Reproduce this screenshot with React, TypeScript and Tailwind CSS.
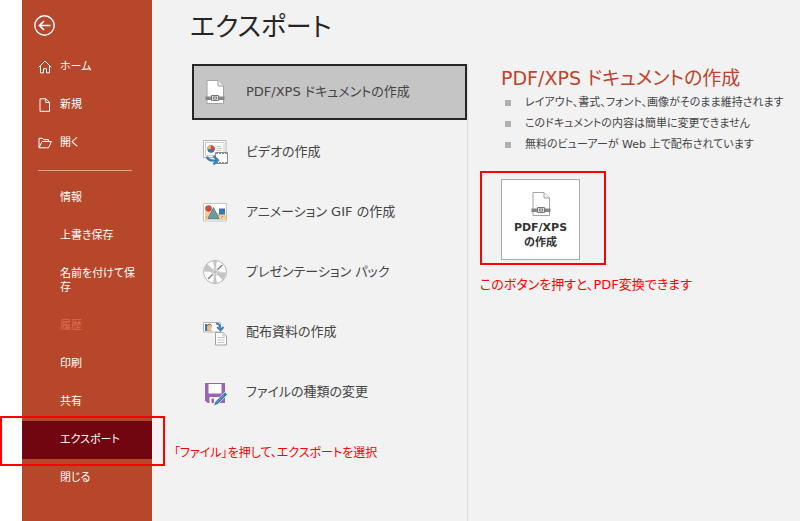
import { useState, type ReactNode } from "react";
import { clsx } from "clsx";

type NavItem = { label: string; icon?: ReactNode; disabled?: boolean };

function HomeIcon() {
  return (
    <svg viewBox="0 0 14 14" className="h-[14px] w-[14px]" fill="none" stroke="currentColor" strokeWidth="1">
      <path d="M.7 7.3 7 1l6.3 6.3M2.5 5.8v7.1h3V8.7h3v4.2h3V5.8" />
    </svg>
  );
}

function NewIcon() {
  return (
    <svg viewBox="0 0 14 14" className="h-[14px] w-[14px]" fill="none" stroke="currentColor" strokeWidth="1">
      <path d="M2 .8h6l3.5 3.5v9H2zM7.8.8v3.7h3.7" />
    </svg>
  );
}

function OpenIcon() {
  return (
    <svg viewBox="0 0 14 14" className="h-[14px] w-[14px]" fill="none" stroke="currentColor" strokeWidth="1">
      <path d="M1 11.8V2.3h3.6l1 1.3h4.8v1.9M1 11.8l3-6.3h9.4l-2.9 6.3z" />
    </svg>
  );
}

const TOP_NAV: NavItem[] = [
  { label: "ホーム", icon: <HomeIcon /> },
  { label: "新規", icon: <NewIcon /> },
  { label: "開く", icon: <OpenIcon /> },
];

const FILE_NAV: NavItem[] = [
  { label: "情報" },
  { label: "上書き保存" },
  { label: "名前を付けて保存" },
  { label: "履歴", disabled: true },
  { label: "印刷" },
  { label: "共有" },
  { label: "エクスポート" },
  { label: "閉じる" },
];

function PdfIcon() {
  return (
    <svg viewBox="0 0 24 28" className="h-[28px] w-[24px]" fill="none">
      <path d="M4 2.5h11l5.5 5.5v17.5H4z" fill="#fff" stroke="#a3a3a3" />
      <path d="M15 2.5V8h5.5" fill="#eee" stroke="#a3a3a3" />
      <path d="M2.5 18.5h19V22h-19z" fill="#858585" />
      <path d="M8.5 17.5h7v5h-7z" fill="#ddd" stroke="#777" />
      <path d="M10.5 19h3v2h-3z" fill="#fff" stroke="#777" />
    </svg>
  );
}

function VideoIcon() {
  return (
    <svg viewBox="0 0 28 28" className="h-[28px] w-[28px]" fill="none">
      <path d="M2.5 2.5H25v17H2.500z" fill="#fff" stroke="#b5b5b5" />
      <path d="M4.500 4.500H23v13H4.500z" stroke="#ccc" />
      <circle cx="10" cy="11" r="3.700" fill="#3b78b5" />
      <path d="M10 11H6.300A3.700 3.700 0 0 1 10 7.300z" fill="#f2ad68" />
      <path d="M10 11V7.300a3.700 3.700 0 0 1 3.200 5.500z" fill="#d8472c" />
      <path d="M15.500 8.500H20M15.500 10.500H21M15.500 12.500H20" stroke="#ccc" />
      <path d="M14.500 14.500h12v11h-12z" fill="#fff" stroke="#8c8c8c" />
      <path d="M15 15.500h11M15 24.500h11" stroke="#8c8c8c" strokeDasharray="2 1" />
      <path d="M6 18.500c.5 3.500 3.500 4.500 9 4M12.500 18l4.300 4.300-4.300 4" stroke="#3b7fc0" strokeWidth="2.400" />
    </svg>
  );
}

function GifIcon() {
  return (
    <svg viewBox="0 0 28 28" className="h-[28px] w-[28px]" fill="none">
      <path d="M2.5 5.5h23v17.500h-23z" fill="#fff" stroke="#c4c4c4" />
      <path d="M4 13.500h3l18 3V22H4z" fill="#f5cd98" />
      <path d="M5 19h1m14 .5h1m-4-2h1m3 1h1" stroke="#de8c4c" />
      <circle cx="7.500" cy="10.500" r="3.300" fill="#d24b3c" />
      <path d="m12.500 9.500 5.500 11H7z" fill="#6f97a4" stroke="#517d8c" strokeWidth=".8" />
      <path d="M18 10.500h6v6h-6z" fill="#3775b5" />
    </svg>
  );
}

function DiscIcon() {
  return (
    <svg viewBox="0 0 28 28" className="h-[28px] w-[28px]" fill="none">
      <circle cx="14" cy="14" r="11.500" fill="#fff" stroke="#b5b5b5" />
      <path d="M14 14 12 3h4zM14 14l2 11h-4z" fill="#c4c4c4" />
      <path d="M14 14 3 13.500 4.300 8.500 6.500 6zM14 14l11 .5-1.300 5-2.200 2.500z" fill="#c4c4c4" />
      <path d="m7 21 4.500-4.500M16.500 11.500 21.500 7" stroke="#858585" strokeWidth="1.500" />
      <circle cx="14" cy="14" r="3.200" fill="#f5f5f5" stroke="#b5b5b5" />
      <circle cx="14" cy="14" r="1.200" fill="#fff" stroke="#999" />
    </svg>
  );
}

function HandoutIcon() {
  return (
    <svg viewBox="0 0 28 28" className="h-[28px] w-[28px]" fill="none">
      <path d="M2.500 4.500h17v9.500h-17z" fill="#fff" stroke="#b5b5b5" />
      <path d="M4 6h2.500v7H4z" fill="#3b78b5" />
      <circle cx="8.500" cy="9" r="2.400" fill="#f0b57c" />
      <path d="M6 13.200c0-2.500 5-2.500 5 0z" fill="#e8a873" />
      <path d="M6.500 7.500c1-2 3.500-1.500 4 0" stroke="#5b4032" />
      <path d="M14.500 14.500H22l3.500 3.500v9h-11z" fill="#fff" stroke="#a3a3a3" />
      <path d="M22 14.500V18h3.500M16.500 19.500h7M16.500 22h7M16.500 24.500h7" stroke="#c0c0c0" />
      <path d="M15 5.500c3.500 0 4.500 2 4.500 6M16.200 9l3.300 3.300 3-3.300" stroke="#3b7fc0" strokeWidth="2" />
    </svg>
  );
}

function FileTypeIcon() {
  return (
    <svg viewBox="0 0 28 28" className="h-[28px] w-[28px]" fill="none">
      <path d="M4 5h20v20H6.500L4 22.500z" fill="#9d62b5" />
      <path d="M7.500 6h13v9.500h-13z" fill="#fff" />
      <path d="M8.500 19h10v6h-10z" fill="#fff" />
      <path d="M10.500 20.500h2.500V25h-2.500z" fill="#9d62b5" />
      <path d="m12.500 28 1.500-4.300L24 14l2.500 2.500-9.700 9.700z" fill="#3b78b5" stroke="#f2f2f2" strokeWidth=".7" />
      <path d="m15.500 24.500 7.500-7.500" stroke="#88b8de" strokeWidth=".7" />
    </svg>
  );
}

const EXPORTS = [
  { label: "PDF/XPS ドキュメントの作成", icon: <PdfIcon /> },
  { label: "ビデオの作成", icon: <VideoIcon /> },
  { label: "アニメーション GIF の作成", icon: <GifIcon /> },
  { label: "プレゼンテーション パック", icon: <DiscIcon /> },
  { label: "配布資料の作成", icon: <HandoutIcon /> },
  { label: "ファイルの種類の変更", icon: <FileTypeIcon /> },
];

const POINTS = [
  "レイアウト、書式、フォント、画像がそのまま維持されます",
  "このドキュメントの内容は簡単に変更できません",
  "無料のビューアーが Web 上で配布されています",
];

function NavButton({ item, active }: { item: NavItem; active?: boolean }) {
  return (
    <li className="relative">
      <button
        type="button"
        disabled={item.disabled}
        className={clsx(
          "flex w-full items-start gap-2 py-3 pr-4 pl-4 text-left text-[11px] leading-[14px]",
          item.disabled ? "text-[#dc6a50]" : "text-white",
          active && "bg-[#710610]"
        )}
      >
        <span className="w-[14px] shrink-0">{item.icon}</span>
        <span>{item.label}</span>
      </button>
      {active && (
        <span className="pointer-events-none absolute -top-[5px] -right-[13px] -bottom-[7px] -left-[22px] border-2 border-[#ff0000]" />
      )}
    </li>
  );
}

export default function App() {
  const [selected, setSelected] = useState(0);

  return (
    <div className="flex min-h-screen bg-white pl-[22px] font-['DejaVu_Sans','Noto_Sans_CJK_JP',sans-serif] [font-feature-settings:'palt']">
      <nav className="z-10 w-[130px] shrink-0 bg-[#b7472a] pt-3">
        <button type="button" aria-label="戻る" className="ml-[10px] block p-px text-white">
          <svg viewBox="0 0 24 24" className="h-6 w-6" fill="none" stroke="currentColor" strokeWidth="1.4">
            <circle cx="11.5" cy="12.5" r="9.7" />
            <path d="M17.5 12.5h-11M11 8l-4.5 4.5L11 17" strokeWidth="1.7" />
          </svg>
        </button>
        <ul className="mt-[10px]">
          {TOP_NAV.map((item) => (
            <NavButton key={item.label} item={item} />
          ))}
        </ul>
        <hr className="mt-2 mr-5 mb-2 ml-4 border-[#e3a18f]" />
        <ul>
          {FILE_NAV.map((item) => (
            <NavButton key={item.label} item={item} active={item.label === "エクスポート"} />
          ))}
        </ul>
      </nav>

      <main className="flex min-w-0 flex-1 flex-col bg-[#f2f2f2]">
        <h1 className="px-[38px] pt-2 text-[26px] leading-[38px] text-[#262626]">エクスポート</h1>
        <div className="mt-[18px] flex flex-1">
          <section className="w-[315px] shrink-0">
            <ul className="flex flex-col gap-1 pl-10">
              {EXPORTS.map((e, i) => (
                <li key={e.label}>
                  <button
                    type="button"
                    aria-pressed={i === selected}
                    onClick={() => setSelected(i)}
                    className={clsx(
                      "flex h-14 w-full items-center border-2 pl-[7px] text-left text-[13px] text-[#444]",
                      i === selected ? "border-[#262626] bg-[#c5c5c5]" : "border-transparent"
                    )}
                  >
                    <span className="flex w-[28px] shrink-0 justify-center">{e.icon}</span>
                    <span className="pl-[17px]">{e.label}</span>
                  </button>
                </li>
              ))}
            </ul>
            <p className="mt-[25px] pl-[22px] text-xs leading-4 text-[#ff0000]">
              「ファイル」を押して、エクスポートを選択
            </p>
          </section>

          <section className="min-w-0 flex-1 border-l border-[#e0e0e0] pl-3">
            <h2 className="pl-[21px] text-[19px] leading-7 text-[#c0432a]">PDF/XPS ドキュメントの作成</h2>
            <ul className="pl-[25px] text-[11px] leading-[21px] text-[#444]">
              {POINTS.map((p) => (
                <li key={p} className="flex items-center gap-[14px]">
                  <span className="h-[6px] w-[6px] shrink-0 bg-[#b0b0b0]" />
                  {p}
                </li>
              ))}
            </ul>
            <div className="mt-4 flex h-[94px] w-[126px] border-2 border-[#ff0000] pt-[6px] pl-[19px]">
              <button
                type="button"
                className="flex h-[81px] w-[79px] flex-col items-center border border-[#ababab] bg-white pt-[10px] text-[11px] leading-[15px] font-bold text-[#333]"
              >
                <PdfIcon />
                <span className="mt-[2px]">PDF/XPS</span>
                <span>の作成</span>
              </button>
            </div>
            <p className="mt-3 text-[13px] leading-4 text-[#ff0000]">このボタンを押すと、PDF変換できます</p>
          </section>
        </div>
      </main>
    </div>
  );
}
